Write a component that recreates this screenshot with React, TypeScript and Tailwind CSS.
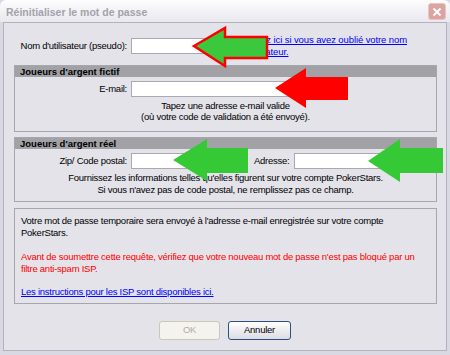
import React from "react";

const font = "font-['Liberation_Sans',Arial,sans-serif]";

const Arrows = () => (
  <svg
    className="absolute inset-0 pointer-events-none"
    width="450"
    height="355"
    viewBox="0 0 450 355"
  >
    <polygon
      points="194,46 225,28 225,37 267,37 267,58 225,58 225,66"
      fill="#3cc83c"
      stroke="#ff0000"
      strokeWidth="2.5"
      strokeLinejoin="miter"
    />
    <polygon
      points="275,88 306,68 306,77 348,77 348,100 306,100 306,108"
      fill="#ff0000"
    />
    <polygon
      points="173,160 207,139 207,148 248,148 248,173 207,173 207,181"
      fill="#36c936"
    />
    <polygon
      points="368,161 400,139 400,148 443,148 443,173 400,173 400,182"
      fill="#36c936"
    />
  </svg>
);

const Field = ({ w }: { w: string }) => (
  <div className={`h-[16px] ${w} bg-white border border-[#a9a9b1]`} />
);

export default function App() {
  return (
    <div
      className={`relative w-[450px] h-[355px] flex flex-col bg-[#d9d9e3] text-[9.5px] tracking-[-0.25px] text-black ${font}`}
    >
      {/* title bar */}
      <div className="h-[22px] flex items-center justify-between pl-[6px] pr-[4px] rounded-t-[6px] bg-gradient-to-b from-[#fdfdfe] to-[#e8e8ee]">
        <span className="text-[10.5px] tracking-normal font-bold text-[#a3a2aa] mt-[3px]">
          Réinitialiser le mot de passe
        </span>
        <div className="w-[18px] h-[17px] mt-[1px] rounded-[3px] bg-[#dca3a3] border border-[#e8c4c4] flex items-center justify-center">
          <svg width="10" height="10" viewBox="0 0 10 10">
            <path d="M1.5 1.5 L8.5 8.5 M8.5 1.5 L1.5 8.5" stroke="#fff" strokeWidth="2" />
          </svg>
        </div>
      </div>

      {/* body */}
      <div className="flex-1 mx-[3px] mb-[4px] border border-[#b3b3bf] bg-[#e3e3e9] flex flex-col">
        {/* username */}
        <div className="mt-[11px] h-[24px] flex items-center">
          <div className="w-[123px] text-right">Nom d'utilisateur (pseudo):</div>
          <div className="ml-[4px]">
            <Field w="w-[105px]" />
          </div>
          <a className="ml-[4px] leading-[12px] text-[#0000ff] underline whitespace-nowrap tracking-[-0.1px]">
            Cliquez ici si vous avez oublié votre nom
            <br />
            d'utilisateur.
          </a>
        </div>

        {/* fictif */}
        <div className="mt-[7px] ml-[10px] w-[423px] border border-[#a6a6ae]">
          <div className="h-[11px] bg-[#a2a2a6] font-bold tracking-normal leading-[11px] pl-[5px]">
            Joueurs d'argent fictif
          </div>
          <div className="mt-[4px] flex items-center">
            <div className="w-[112px] text-right">E-mail:</div>
            <div className="ml-[4px]">
              <Field w="w-[200px]" />
            </div>
          </div>
          <div className="mt-[3px] pb-[9px] text-center leading-[11px]">
            Tapez une adresse e-mail valide
            <br />
            (où votre code de validation a été envoyé).
          </div>
        </div>

        {/* réel */}
        <div className="mt-[5px] ml-[10px] w-[423px] border border-[#a6a6ae]">
          <div className="h-[11px] bg-[#a2a2a6] font-bold tracking-normal leading-[11px] pl-[5px]">
            Joueurs d'argent réel
          </div>
          <div className="mt-[4px] flex items-center">
            <div className="w-[112px] text-right">Zip/ Code postal:</div>
            <div className="ml-[4px]">
              <Field w="w-[115px]" />
            </div>
            <div className="ml-[8px]">Adresse:</div>
            <div className="ml-[4px]">
              <Field w="w-[137px]" />
            </div>
          </div>
          <div className="mt-[3px] pb-[5px] text-center leading-[12px]">
            Fournissez les informations telles qu'elles figurent sur votre compte PokerStars.
            <br />
            Si vous n'avez pas de code postal, ne remplissez pas ce champ.
          </div>
        </div>

        {/* info */}
        <div className="mt-[6px] ml-[10px] w-[423px] border border-[#a6a6ae] px-[6px] pt-[6px] pb-[5px] leading-[12px]">
          <p className="whitespace-nowrap">
            Votre mot de passe temporaire sera envoyé à l'adresse e-mail enregistrée sur votre compte
            <br />
            PokerStars.
          </p>
          <p className="mt-[12px] text-[#ff0000] whitespace-nowrap">
            Avant de soumettre cette requête, vérifiez que votre nouveau mot de passe n'est pas bloqué par un
            <br />
            filtre anti-spam ISP.
          </p>
          <p className="mt-[11px]">
            <a className="text-[#0000ff] underline">Les instructions pour les ISP sont disponibles ici.</a>
          </p>
        </div>

        {/* buttons */}
        <div className="mt-[17px] flex justify-center gap-[8px]">
          <button
            disabled
            className="w-[61px] h-[19px] rounded-[3px] border border-[#cac8bb] bg-[#f4f3ee] text-[#b0ae9f]"
          >
            OK
          </button>
          <button className="w-[63px] h-[19px] rounded-[3px] border border-[#2e4f86] bg-gradient-to-b from-[#ffffff] to-[#dcdce2]">
            Annuler
          </button>
        </div>
      </div>

      <Arrows />
    </div>
  );
}
